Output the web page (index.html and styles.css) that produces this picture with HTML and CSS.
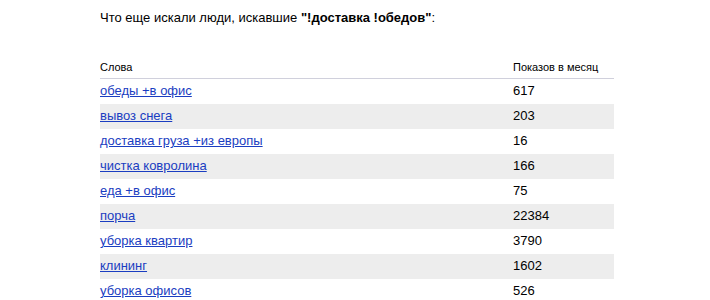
FILE: index.html
```html
<!DOCTYPE html>
<html lang="ru">
<head>
<meta charset="utf-8">
<link rel="stylesheet" href="styles.css">
</head>
<body>
<div class="page">
  <p class="title">Что еще искали люди, искавшие <b>"!доставка !обедов"</b>:</p>
  <table class="words">
    <thead>
      <tr><th class="c1">Слова</th><th class="c2">Показов в месяц</th></tr>
    </thead>
    <tbody>
      <tr><td class="c1"><a href="#">обеды +в офис</a></td><td class="c2">617</td></tr>
      <tr class="alt"><td class="c1"><a href="#">вывоз снега</a></td><td class="c2">203</td></tr>
      <tr><td class="c1"><a href="#">доставка груза +из европы</a></td><td class="c2">16</td></tr>
      <tr class="alt"><td class="c1"><a href="#">чистка ковролина</a></td><td class="c2">166</td></tr>
      <tr><td class="c1"><a href="#">еда +в офис</a></td><td class="c2">75</td></tr>
      <tr class="alt"><td class="c1"><a href="#">порча</a></td><td class="c2">22384</td></tr>
      <tr><td class="c1"><a href="#">уборка квартир</a></td><td class="c2">3790</td></tr>
      <tr class="alt"><td class="c1"><a href="#">клининг</a></td><td class="c2">1602</td></tr>
      <tr><td class="c1"><a href="#">уборка офисов</a></td><td class="c2">526</td></tr>
    </tbody>
  </table>
</div>
</body>
</html>
```
FILE: styles.css
```css
html, body {
  margin: 0;
  padding: 0;
  background: #fff;
}
.page {
  padding: 10px 0 0 100px;
  font-family: "Liberation Sans", Arial, sans-serif;
  color: #000;
}
.title {
  margin: 0 0 35px 0;
  font-size: 13px;
  line-height: 16px;
}
.words {
  width: 514px;
  border-collapse: collapse;
  border-spacing: 0;
}
.words th {
  font-weight: normal;
  font-size: 11px;
  line-height: 13px;
  text-align: left;
  padding: 0 0 4px 0;
  border-bottom: 1px solid #d0d0dc;
}
.words td {
  font-size: 13px;
  line-height: 16px;
  height: 25px;
  padding: 0;
  box-sizing: border-box;
  vertical-align: middle;
}
.words .c1 {
  width: 413px;
}
.words tr.alt td {
  background: #ededed;
}
.words a {
  color: #1a3dc1;
  text-decoration: underline;
}
```
